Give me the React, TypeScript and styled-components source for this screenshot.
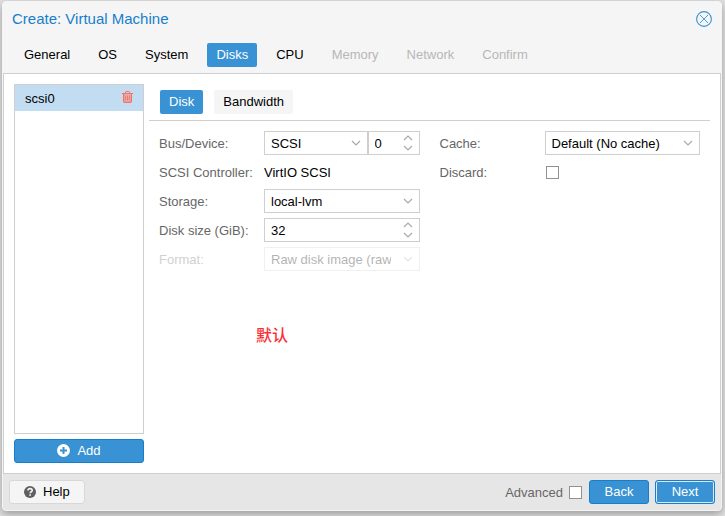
import React, { useId, useState } from "react";
import styled, { createGlobalStyle, css } from "styled-components";

const GlobalStyle = createGlobalStyle`
  *, *::before, *::after { box-sizing: border-box; }
  body {
    margin: 0;
    background: #e2e2e2;
    color: #000;
    font: 13px/17px "Liberation Sans", Arial, "Noto Sans CJK SC", sans-serif;
  }
  button, input, select { font: inherit; color: inherit; margin: 0; }
`;

const Page = styled.div`
  display: flex;
  min-height: 100vh;
  padding: 1px 3px 5px 2px;
`;

const Dialog = styled.section`
  flex: 1;
  min-width: 0;
  display: flex;
  flex-direction: column;
  border: 1px solid #f5f5f5;
  border-radius: 4px;
  background: #f5f5f5;
  box-shadow: 0 3px 8px #999;
`;

const TitleBar = styled.header`
  display: flex;
  align-items: center;
  justify-content: space-between;
  height: 34px;
  padding: 0 9px;
`;

const Title = styled.h1`
  margin: 0;
  color: #157fcc;
  font-size: 15px;
  font-weight: 400;
  line-height: 20px;
`;

const CloseButton = styled.button`
  display: flex;
  padding: 0;
  border: 0;
  background: none;
  color: #3892d4;
`;

const TabBar = styled.nav<{ $inner?: boolean }>`
  display: flex;
  ${(p) =>
    p.$inner
      ? css`
          gap: 11px;
          padding: 6px 11px;
          border-bottom: 1px solid #cfcfcf;
        `
      : css`
          gap: 10px;
          padding: 7px 12px 6px;
        `}
`;

const Tab = styled.button<{ $active?: boolean; $filled?: boolean }>`
  height: 24px;
  padding: 0 9px 2px;
  border: 0;
  border-radius: 2px;
  background: ${(p) => (p.$active ? "#3892d4" : p.$filled ? "#f5f5f5" : "transparent")};
  color: ${(p) => (p.$active ? "#fff" : "#000")};
  &:disabled { color: #b7b7b7; }
`;

const Body = styled.main`
  flex: 1;
  display: flex;
  gap: 5px;
  padding: 10px;
  border: 1px solid #cfcfcf;
  background: #fff;
`;

const Sidebar = styled.aside`
  flex: none;
  width: 130px;
  display: flex;
  flex-direction: column;
  gap: 5px;
`;

const DiskList = styled.ul`
  flex: 1;
  margin: 0;
  padding: 0;
  border: 1px solid #cfcfcf;
  list-style: none;
`;

const DiskRow = styled.li`
  display: flex;
  align-items: center;
  justify-content: space-between;
  height: 26px;
  padding: 0 10px;
  background: #c2ddf2;
`;

const RemoveButton = styled.button`
  display: flex;
  padding: 0 0 2px;
  border: 0;
  background: none;
  color: #ff6c59;
`;

const Button = styled.button<{ $primary?: boolean; $focused?: boolean }>`
  display: flex;
  align-items: center;
  justify-content: center;
  gap: 7px;
  height: 24px;
  min-width: 60px;
  padding: 0 14px 1px;
  border: 1px solid ${(p) => (p.$primary ? "#157fcc" : "#d8d8d8")};
  border-radius: 3px;
  background: ${(p) => (p.$primary ? "#3892d4" : "#f5f5f5")};
  color: ${(p) => (p.$primary ? "#fff" : "#000")};
  ${(p) => p.$focused && "box-shadow: inset 0 0 0 1px #dcebf7;"}
`;

const Panel = styled.section`
  flex: 1;
  min-width: 0;
`;

const Form = styled.form`
  display: grid;
  grid-template-columns: 1fr 1fr;
  gap: 20px;
  padding: 10px;
`;

const Column = styled.div`
  display: flex;
  flex-direction: column;
  gap: 5px;
`;

const Field = styled.div<{ $disabled?: boolean }>`
  display: flex;
  align-items: center;
  height: 24px;
  opacity: ${(p) => (p.$disabled ? 0.3 : 1)};
`;

const Label = styled.label`
  flex: none;
  width: 105px;
  color: #666;
`;

const Control = styled.div<{ $narrow?: boolean }>`
  position: relative;
  height: 24px;
  ${(p) => (p.$narrow ? "flex: none; width: 52px;" : "flex: 1; min-width: 0;")}
`;

const boxed = css`
  width: 100%;
  height: 24px;
  border: 1px solid #cfcfcf;
  border-radius: 0;
  background: #fff;
  color: #000;
  opacity: 1;
`;

const SelectBox = styled.select`
  ${boxed}
  appearance: none;
  padding: 0 28px 0 6px;
`;

const NumberBox = styled.input`
  ${boxed}
  padding: 0 20px 0 6px;
`;

const Chevron = styled.svg`
  position: absolute;
  right: 7px;
  top: 9px;
  pointer-events: none;
`;

const Spinner = styled.div`
  position: absolute;
  right: 7px;
  top: 4px;
  bottom: 4px;
  display: flex;
  flex-direction: column;
  justify-content: space-between;
`;

const SpinButton = styled.button`
  display: flex;
  padding: 0;
  border: 0;
  background: none;
`;

const CheckBox = styled.input`
  appearance: none;
  width: 13px;
  height: 13px;
  border: 1px solid #919191;
  background: #fff;
  &:checked { background: #3892d4; box-shadow: inset 0 0 0 2px #fff; }
`;

const CheckSlot = styled.span`
  display: flex;
  padding: 0 1px;
`;

const Note = styled.p`
  margin: 43px 107px 0;
  color: #fb3035;
  font-size: 16px;
  font-weight: 500;
  line-height: 24px;
`;

const Footer = styled.footer`
  display: flex;
  align-items: center;
  gap: 6px;
  padding: 6px;
  border-radius: 0 0 3px 3px;
  background: #e6e6e6;
`;

const Advanced = styled.label`
  display: flex;
  align-items: center;
  gap: 6px;
  margin-left: auto;
  padding-right: 1px;
  color: #666;
`;

const Arrow = ({ up }: { up?: boolean }) => (
  <svg width="10" height="6" viewBox="0 0 10 6" fill="none" stroke="#aaa" strokeWidth="1.2" aria-hidden>
    <path d={up ? "M1 5 5 1 9 5" : "M1 1 5 5 9 1"} />
  </svg>
);

const CloseIcon = () => (
  <svg width="16" height="16" viewBox="0 0 16 16" fill="none" stroke="currentColor" aria-hidden>
    <circle cx="8" cy="8" r="7.4" strokeWidth="1.1" />
    <path d="m4 4 8 8M12 4l-8 8" strokeWidth="0.9" />
  </svg>
);

const TrashIcon = () => (
  <svg width="11" height="12" viewBox="0 0 11 12" fill="none" stroke="currentColor" aria-hidden>
    <path d="M0 2.5h11" />
    <path d="M3.5 2.5V1.2q0-.7.7-.7h2.6q.7 0 .7.7v1.3" />
    <path d="M1.6 2.5v7.6q0 1.3 1.1 1.3h5.6q1.1 0 1.1-1.3V2.5" strokeWidth="1.2" fill="currentColor" fillOpacity="0.35" />
    <path d="M3.7 4.5v5M5.5 4.5v5M7.3 4.5v5" strokeWidth="0.9" />
  </svg>
);

const PlusIcon = () => (
  <svg width="13" height="13" viewBox="0 0 13 13" aria-hidden>
    <circle cx="6.5" cy="6.5" r="6.5" fill="#fff" />
    <path d="M6.5 3v7M3 6.5h7" stroke="#3892d4" strokeWidth="2" />
  </svg>
);

const HelpIcon = () => (
  <svg width="12" height="12" viewBox="0 0 12 12" fill="none" aria-hidden>
    <circle cx="6" cy="6" r="6" fill="#606060" />
    <path d="M4 4.6C4 3.3 4.9 2.6 6.1 2.6S8.2 3.4 8.2 4.4C8.2 5.7 6.2 5.8 6.2 7.3" stroke="#f5f5f5" strokeWidth="1.6" />
    <path d="M5.3 8.2h1.7v1.6H5.3z" fill="#f5f5f5" />
  </svg>
);

interface SelectFieldProps {
  id: string;
  options: string[];
  disabled?: boolean;
}

const Select = ({ id, options, disabled }: SelectFieldProps) => (
  <Control>
    <SelectBox id={id} disabled={disabled}>
      {options.map((option) => (
        <option key={option}>{option}</option>
      ))}
    </SelectBox>
    <Chevron width="10" height="6" viewBox="0 0 10 6" fill="none" stroke="#aaa" strokeWidth="1.2" aria-hidden>
      <path d="M1 1 5 5 9 1" />
    </Chevron>
  </Control>
);

interface NumberFieldProps {
  id?: string;
  label: string;
  initial: number;
  narrow?: boolean;
}

const NumberInput = ({ id, label, initial, narrow }: NumberFieldProps) => {
  const [value, setValue] = useState(initial);
  return (
    <Control $narrow={narrow}>
      <NumberBox
        id={id}
        aria-label={label}
        inputMode="numeric"
        value={value}
        onChange={(e) => setValue(Number(e.target.value) || 0)}
      />
      <Spinner>
        <SpinButton type="button" aria-label={`Increase ${label}`} onClick={() => setValue(value + 1)}>
          <Arrow up />
        </SpinButton>
        <SpinButton type="button" aria-label={`Decrease ${label}`} onClick={() => setValue(Math.max(0, value - 1))}>
          <Arrow />
        </SpinButton>
      </Spinner>
    </Control>
  );
};

const steps = [
  { name: "General" },
  { name: "OS" },
  { name: "System" },
  { name: "Disks", active: true },
  { name: "CPU" },
  { name: "Memory", disabled: true },
  { name: "Network", disabled: true },
  { name: "Confirm", disabled: true },
];

export default function App() {
  const id = useId();
  return (
    <Page>
      <GlobalStyle />
      <Dialog role="dialog" aria-labelledby={`${id}title`}>
        <TitleBar>
          <Title id={`${id}title`}>Create: Virtual Machine</Title>
          <CloseButton type="button" aria-label="Close">
            <CloseIcon />
          </CloseButton>
        </TitleBar>
        <TabBar>
          {steps.map((step) => (
            <Tab key={step.name} type="button" $active={step.active} disabled={step.disabled}>
              {step.name}
            </Tab>
          ))}
        </TabBar>
        <Body>
          <Sidebar>
            <DiskList>
              <DiskRow>
                scsi0
                <RemoveButton type="button" aria-label="Remove scsi0">
                  <TrashIcon />
                </RemoveButton>
              </DiskRow>
            </DiskList>
            <Button type="button" $primary>
              <PlusIcon />
              Add
            </Button>
          </Sidebar>
          <Panel>
            <TabBar $inner>
              <Tab type="button" $active>
                Disk
              </Tab>
              <Tab type="button" $filled>
                Bandwidth
              </Tab>
            </TabBar>
            <Form>
              <Column>
                <Field>
                  <Label htmlFor={`${id}bus`}>Bus/Device:</Label>
                  <Select id={`${id}bus`} options={["SCSI", "IDE", "SATA", "VirtIO Block"]} />
                  <NumberInput label="Device number" initial={0} narrow />
                </Field>
                <Field>
                  <Label as="span">SCSI Controller:</Label>
                  <span>VirtIO SCSI</span>
                </Field>
                <Field>
                  <Label htmlFor={`${id}storage`}>Storage:</Label>
                  <Select id={`${id}storage`} options={["local-lvm"]} />
                </Field>
                <Field>
                  <Label htmlFor={`${id}size`}>Disk size (GiB):</Label>
                  <NumberInput id={`${id}size`} label="Disk size (GiB)" initial={32} />
                </Field>
                <Field $disabled>
                  <Label htmlFor={`${id}format`}>Format:</Label>
                  <Select id={`${id}format`} options={["Raw disk image (raw)"]} disabled />
                </Field>
              </Column>
              <Column>
                <Field>
                  <Label htmlFor={`${id}cache`}>Cache:</Label>
                  <Select id={`${id}cache`} options={["Default (No cache)"]} />
                </Field>
                <Field>
                  <Label htmlFor={`${id}discard`}>Discard:</Label>
                  <CheckSlot>
                    <CheckBox id={`${id}discard`} type="checkbox" />
                  </CheckSlot>
                </Field>
              </Column>
            </Form>
            <Note>默认</Note>
          </Panel>
        </Body>
        <Footer>
          <Button type="button">
            <HelpIcon />
            Help
          </Button>
          <Advanced>
            Advanced
            <CheckBox type="checkbox" />
          </Advanced>
          <Button type="button" $primary>
            Back
          </Button>
          <Button type="button" $primary $focused>
            Next
          </Button>
        </Footer>
      </Dialog>
    </Page>
  );
}
